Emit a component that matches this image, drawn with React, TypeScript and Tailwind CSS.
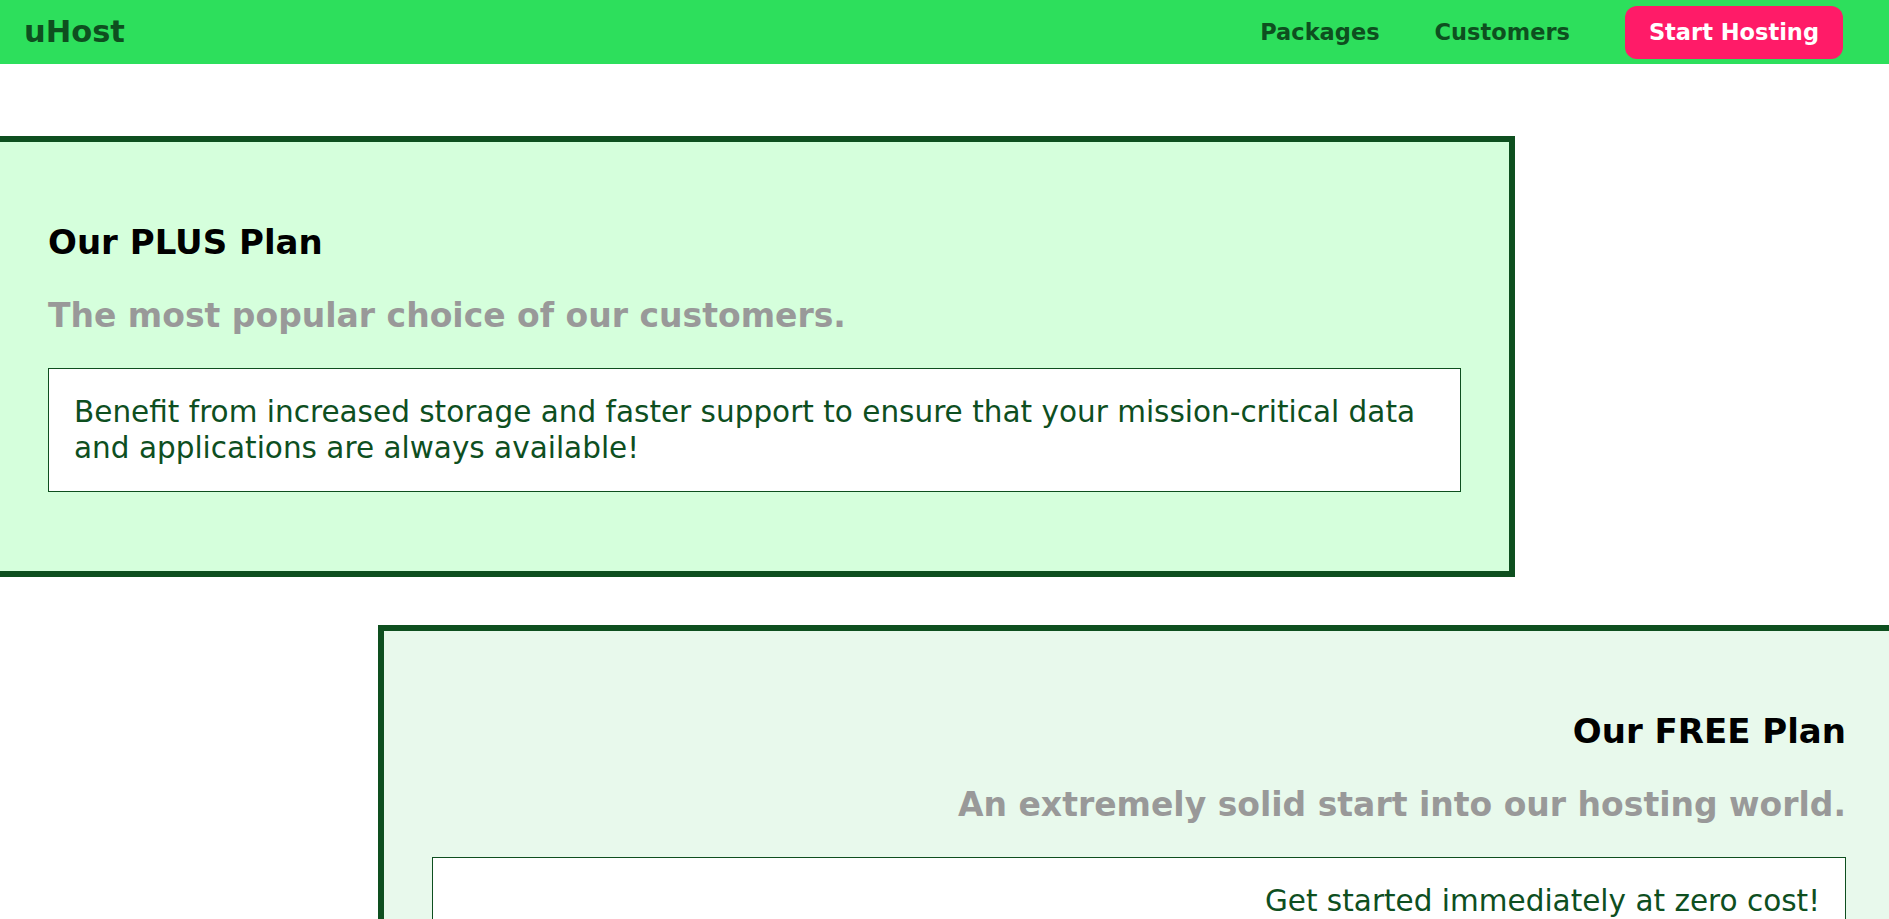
type PlanProps = {
  title: string;
  subtitle: string;
  text: string;
  right?: boolean;
};

function PlanBody({ title, subtitle, text, right }: PlanProps) {
  return (
    <div className={right ? "text-right" : "text-left"}>
      <h1 className="text-[34px] font-bold leading-[46px] text-black">{title}</h1>
      <h2 className="mt-[28px] text-[33px] font-bold leading-[46px] text-[#999999]">{subtitle}</h2>
      <p className="mt-[29px] border border-[#0e4f1f] bg-white p-[25px] text-[29.5px] leading-[36px] text-[#0e4f1f]">
        {text}
      </p>
    </div>
  );
}

export default function App() {
  return (
    <div className="h-screen overflow-hidden bg-white font-['DejaVu_Sans',sans-serif]">
      <header className="flex h-16 items-center justify-between bg-[#2ddf5c] pl-6 pr-[46px]">
        <a href="#" className="text-[30.5px] font-bold text-[#0e4f1f]">
          uHost
        </a>
        <nav className="flex items-center gap-[55px] text-[22.5px] font-bold text-[#0e4f1f]">
          <a href="#" className="pt-[2px]">Packages</a>
          <a href="#" className="pt-[2px]">Customers</a>
          <a href="#" className="flex h-[53px] items-center rounded-[12px] bg-[#ff1b68] px-6 pt-[2px] text-white">
            Start Hosting
          </a>
        </nav>
      </header>

      <main>
        <section className="ml-[-6px] mt-[72px] w-[1521px] border-[6px] border-[#0e4f1f] bg-[#d5ffdc] px-12 pb-[79px] pt-[77px]">
          <PlanBody
            title="Our PLUS Plan"
            subtitle="The most popular choice of our customers."
            text="Benefit from increased storage and faster support to ensure that your mission-critical data and applications are always available!"
          />
        </section>

        <section className="ml-[378px] mt-12 w-[1522px] border-[6px] border-[#0e4f1f] bg-[#e8f9ec] px-12 pb-[79px] pt-[77px]">
          <PlanBody
            right
            title="Our FREE Plan"
            subtitle="An extremely solid start into our hosting world."
            text="Get started immediately at zero cost!"
          />
        </section>
      </main>
    </div>
  );
}
